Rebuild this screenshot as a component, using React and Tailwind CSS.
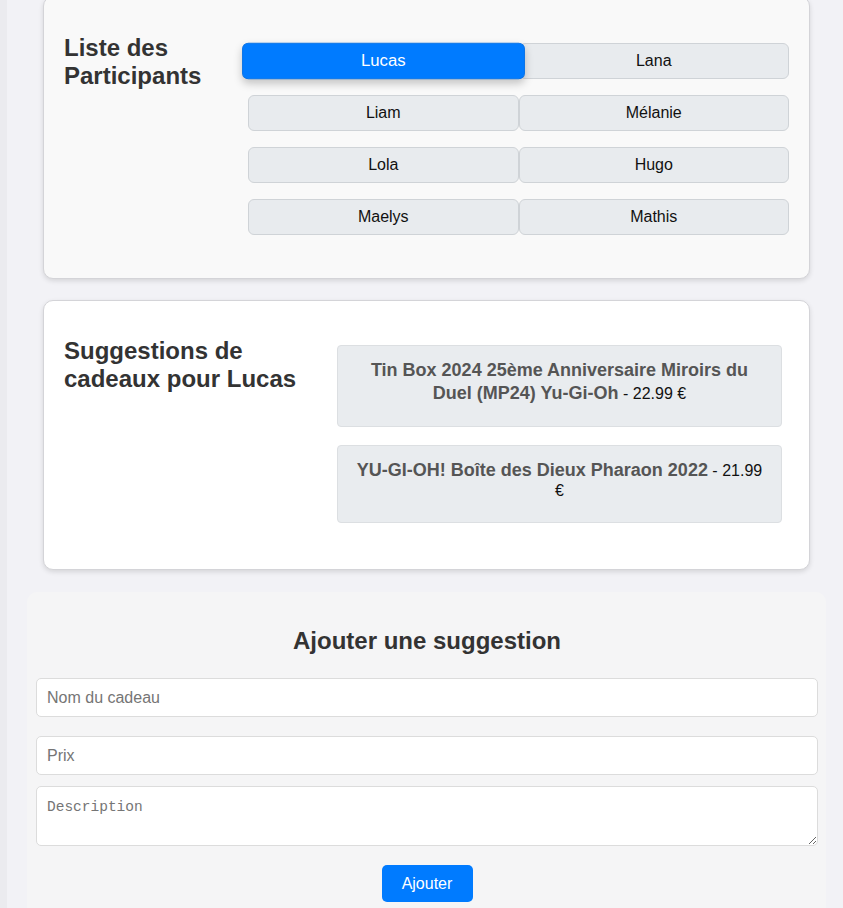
import React from "react";

const participants = ["Lucas", "Lana", "Liam", "Mélanie", "Lola", "Hugo", "Maelys", "Mathis"];

export default function App() {
  return (
    <div className="min-h-screen bg-[#ebebef] font-['Liberation_Sans',Arial,sans-serif] overflow-hidden">
      <div className="ml-[7px] min-h-screen bg-[#f2f2f6] pb-10">
        {/* Card 1 */}
        <div className="-mt-[4px] ml-[36px] w-[767px] rounded-[10px] border border-[#d4d4d8] bg-[#f9f9f9] px-[20px] pt-[19px] pb-[19px] shadow-[0_2px_5px_rgba(0,0,0,0.12)] flex items-start">
          <h2 className="w-[184px] mt-[18px] text-[24px] leading-[28px] font-bold text-[#333]">
            Liste des Participants
          </h2>
          <div className="flex-1 mt-[27px] mb-[24px] grid grid-cols-2 gap-y-[16px]">
            {participants.map((p, i) =>
              i === 0 ? (
                <button
                  key={p}
                  className="relative z-10 h-[36px] rounded-[6px] border border-[#0a74e8] bg-[#007bff] text-[16px] text-white scale-x-[1.044] scale-y-[1.02] shadow-[0_4px_8px_rgba(0,0,0,0.22)]"
                >
                  {p}
                </button>
              ) : (
                <button
                  key={p}
                  className="h-[36px] rounded-[6px] border border-[#cfd3d7] bg-[#e8ebee] text-[16px] text-[#111]"
                >
                  {p}
                </button>
              )
            )}
          </div>
        </div>

        {/* Card 2 */}
        <div className="mt-[21px] ml-[36px] w-[767px] rounded-[10px] border border-[#d4d4d8] bg-white px-[20px] pt-[19px] pb-[19px] shadow-[0_2px_5px_rgba(0,0,0,0.12)] flex items-start">
          <h2 className="w-[273px] mt-[17px] text-[24px] leading-[28px] font-bold text-[#333]">
            Suggestions de cadeaux pour Lucas
          </h2>
          <div className="w-[445px] mt-[25px] mb-[27px] flex flex-col gap-[18px]">
            <div className="rounded-[4px] border border-[#dcdfe2] bg-[#e9ecef] px-[16px] pt-[13px] pb-[21px] text-center text-[16px] leading-[22px] text-[#111]">
              <strong className="text-[18px] leading-[22px] text-[#555]">
                Tin Box 2024 25ème Anniversaire Miroirs du Duel (MP24) Yu-Gi-Oh
              </strong>{" "}
              - 22.99 €
            </div>
            <div className="rounded-[4px] border border-[#dcdfe2] bg-[#e9ecef] px-[16px] pt-[13px] pb-[21px] text-center text-[16px] leading-[20px] text-[#111]">
              <strong className="text-[18px] leading-[22px] text-[#555]">
                YU-GI-OH! Boîte des Dieux Pharaon 2022
              </strong>{" "}
              - 21.99 €
            </div>
          </div>
        </div>

        {/* Form */}
        <div className="mt-[22px] ml-[20px] w-[799px] rounded-[10px] bg-[#f5f5f6] pl-[9px] pr-[8px] pt-[20px] pb-[20px]">
          <h2 className="mt-[15px] text-center text-[24px] leading-[28px] font-bold text-[#333]">
            Ajouter une suggestion
          </h2>
          <input
            type="text"
            placeholder="Nom du cadeau"
            className="mt-[23px] block w-full h-[39px] rounded-[5px] border border-[#dcdcdc] bg-white px-[10px] text-[16px] placeholder:text-[#757575] outline-none"
          />
          <input
            type="text"
            placeholder="Prix"
            className="mt-[19px] block w-full h-[39px] rounded-[5px] border border-[#dcdcdc] bg-white px-[10px] text-[16px] placeholder:text-[#757575] outline-none"
          />
          <textarea
            placeholder="Description"
            className="mt-[11px] block w-full h-[60px] rounded-[5px] border border-[#dcdcdc] bg-white px-[10px] py-[12px] font-['Liberation_Mono',monospace] text-[14.5px] leading-[16px] placeholder:text-[#757575] outline-none"
          />
          <div className="mt-[19px] flex justify-center">
            <button className="h-[37px] w-[91px] rounded-[5px] bg-[#007bff] text-[16px] text-white">
              Ajouter
            </button>
          </div>
        </div>
      </div>
    </div>
  );
}
